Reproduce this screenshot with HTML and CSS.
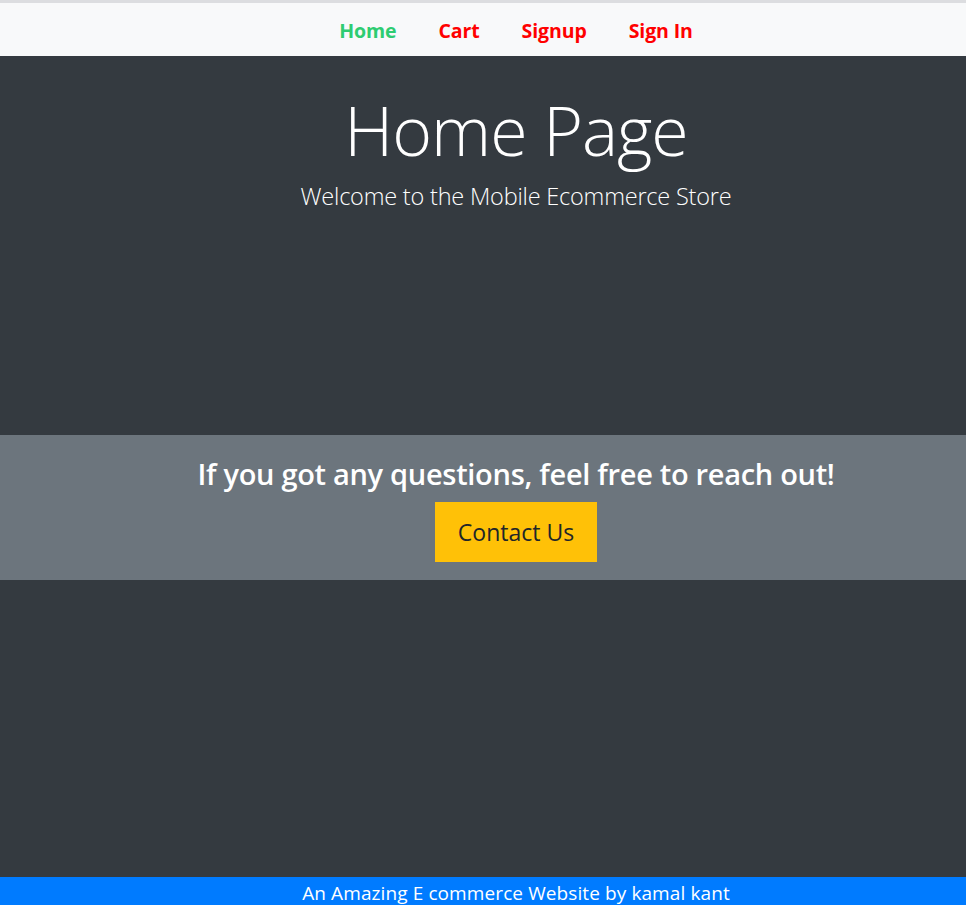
FILE: index.html
```html
<!DOCTYPE html>
<html lang="en">
<head>
<meta charset="utf-8">
<title>Home Page</title>
<link rel="stylesheet" href="styles.css">
</head>
<body>
<div class="page">
  <nav class="topnav">
    <a class="nav-link active" href="#">Home</a>
    <a class="nav-link" href="#">Cart</a>
    <a class="nav-link" href="#">Signup</a>
    <a class="nav-link" href="#">Sign In</a>
  </nav>
  <header class="hero">
    <h1 class="hero-title">Home Page</h1>
    <p class="hero-lead">Welcome to the Mobile Ecommerce Store</p>
  </header>
  <section class="contact-band">
    <h3 class="contact-title">If you got any questions, feel free to reach out!</h3>
    <a class="btn-contact" href="#">Contact Us</a>
  </section>
  <div class="filler"></div>
  <footer class="footer">An Amazing E commerce Website by kamal kant</footer>
</div>
</body>
</html>
```

FILE: styles.css
```css
* { box-sizing: border-box; }
html, body { margin: 0; padding: 0; height: 100%; }
body {
  font-family: "Open Sans", "Noto Sans", "Liberation Sans", sans-serif;
  background: #343a40;
  color: #fff;
}
.page {
  display: flex;
  flex-direction: column;
  height: 100vh;
  overflow: hidden;
}
.topnav {
  flex: none;
  height: 56px;
  border-top: 3px solid #dcdde0;
  background: #f8f9fa;
  display: flex;
  justify-content: center;
  align-items: center;
  padding-left: 66px;
  padding-top: 2px;
}
.nav-link {
  font-weight: 700;
  font-size: 19.5px;
  color: #ff0000;
  text-decoration: none;
  padding: 0 21px;
  letter-spacing: -0.1px;
}
.nav-link.active { color: #2ecc71; }
.hero {
  flex: none;
  height: 379px;
  text-align: center;
  padding-top: 33px;
  padding-left: 66px;
}
.hero-title {
  margin: 0;
  font-size: 68px;
  font-weight: 300;
  line-height: 1.2;
  letter-spacing: -1px;
}
.hero-lead {
  margin: 10px 0 0;
  font-size: 23.5px;
  font-weight: 300;
  line-height: 1.3;
  letter-spacing: -0.2px;
}
.contact-band {
  flex: none;
  height: 145px;
  background: #6c757d;
  text-align: center;
  padding-top: 22px;
  padding-left: 66px;
}
.contact-title {
  margin: 0 0 10px;
  font-size: 29px;
  font-weight: 600;
  line-height: 1.2;
  letter-spacing: -0.3px;
}
.btn-contact {
  display: inline-block;
  background: #ffc107;
  color: #212529;
  text-decoration: none;
  font-size: 23px;
  line-height: 36px;
  padding: 12px 19px;
  width: 162px;
  text-align: center;
}
.filler { flex: 1; }
.footer {
  flex: none;
  height: 28px;
  background: #007bff;
  color: #fff;
  text-align: center;
  font-size: 19px;
  line-height: 32px;
  padding-left: 66px;
  letter-spacing: 0.1px;
}
```
